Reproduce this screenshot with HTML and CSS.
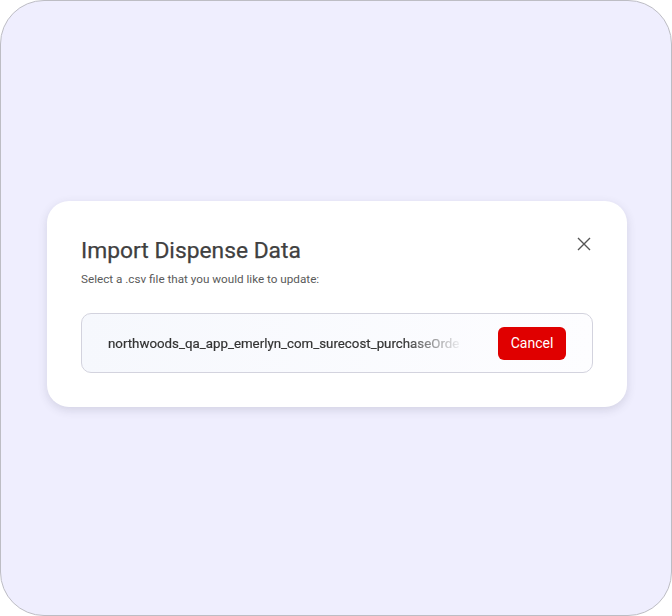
FILE: index.html
```html
<!DOCTYPE html>
<html>
<head>
<meta charset="utf-8">
<link rel="stylesheet" href="styles.css">
</head>
<body>
<div class="frame">
  <div class="dialog">
    <div class="head">
      <div class="titles">
        <h1 class="title">Import Dispense Data</h1>
        <p class="subtitle">Select a .csv file that you would like to update:</p>
      </div>
      <button class="close" aria-label="Close">
        <svg width="14" height="14" viewBox="0 0 14 14"><path d="M1 1L13 13M13 1L1 13" stroke="#555" stroke-width="1.4" fill="none"/></svg>
      </button>
    </div>
    <div class="file">
      <span class="filename">northwoods_qa_app_emerlyn_com_surecost_purchaseOrde</span>
      <button class="cancel">Cancel</button>
    </div>
  </div>
</div>
</body>
</html>
```
FILE: styles.css
```css
* { box-sizing: border-box; }
html, body { margin: 0; padding: 0; background: #fff; }
body { font-family: Roboto, "Noto Sans", sans-serif; }
.frame {
  width: 672px;
  height: 616px;
  border: 1px solid #bdbdc4;
  border-radius: 44px;
  background: #efeefe;
  display: flex;
  align-items: center;
  justify-content: center;
  padding-bottom: 8px;
}
.dialog {
  width: 580px;
  background: #fff;
  border-radius: 22px;
  padding: 34px 34px 34px 34px;
  box-shadow: 0 3px 10px rgba(60, 60, 90, 0.16);
  margin-left: 2px;
}
.head {
  display: flex;
  justify-content: space-between;
  align-items: flex-start;
}
.title {
  margin: 0;
  font-size: 22.8px;
  font-weight: 400;
  line-height: 32px;
  color: #404040;
  -webkit-text-stroke: 0.25px #404040;
}
.subtitle {
  margin: 4px 0 0;
  font-size: 11.7px;
  line-height: 16px;
  color: #5a5a5a;
}
.close {
  border: 0;
  background: none;
  padding: 0;
  margin: 2px 2px 0 0;
  width: 14px;
  height: 14px;
  cursor: pointer;
}
.close svg { display: block; }
.file {
  margin-top: 26px;
  height: 60px;
  border: 1px solid #d3d3de;
  border-radius: 10px;
  background: linear-gradient(90deg, #f6f8fd, #fdfdff);
  display: flex;
  align-items: center;
  justify-content: space-between;
  padding: 0 26px 0 26px;
}
.filename {
  white-space: nowrap;
  font-size: 13.3px;
  font-weight: 400;
  color: #333;
  -webkit-text-stroke: 0.2px #333;
  -webkit-mask-image: linear-gradient(90deg, #000 0, #000 295px, rgba(0,0,0,0.08) 100%);
  mask-image: linear-gradient(90deg, #000 0, #000 295px, rgba(0,0,0,0.08) 100%);
}
.cancel {
  border: 0;
  background: #e00000;
  color: #fff;
  font-family: Roboto, sans-serif;
  font-size: 14px;
  font-weight: 400;
  width: 68px;
  height: 33px;
  border-radius: 6px;
  cursor: pointer;
}
```
